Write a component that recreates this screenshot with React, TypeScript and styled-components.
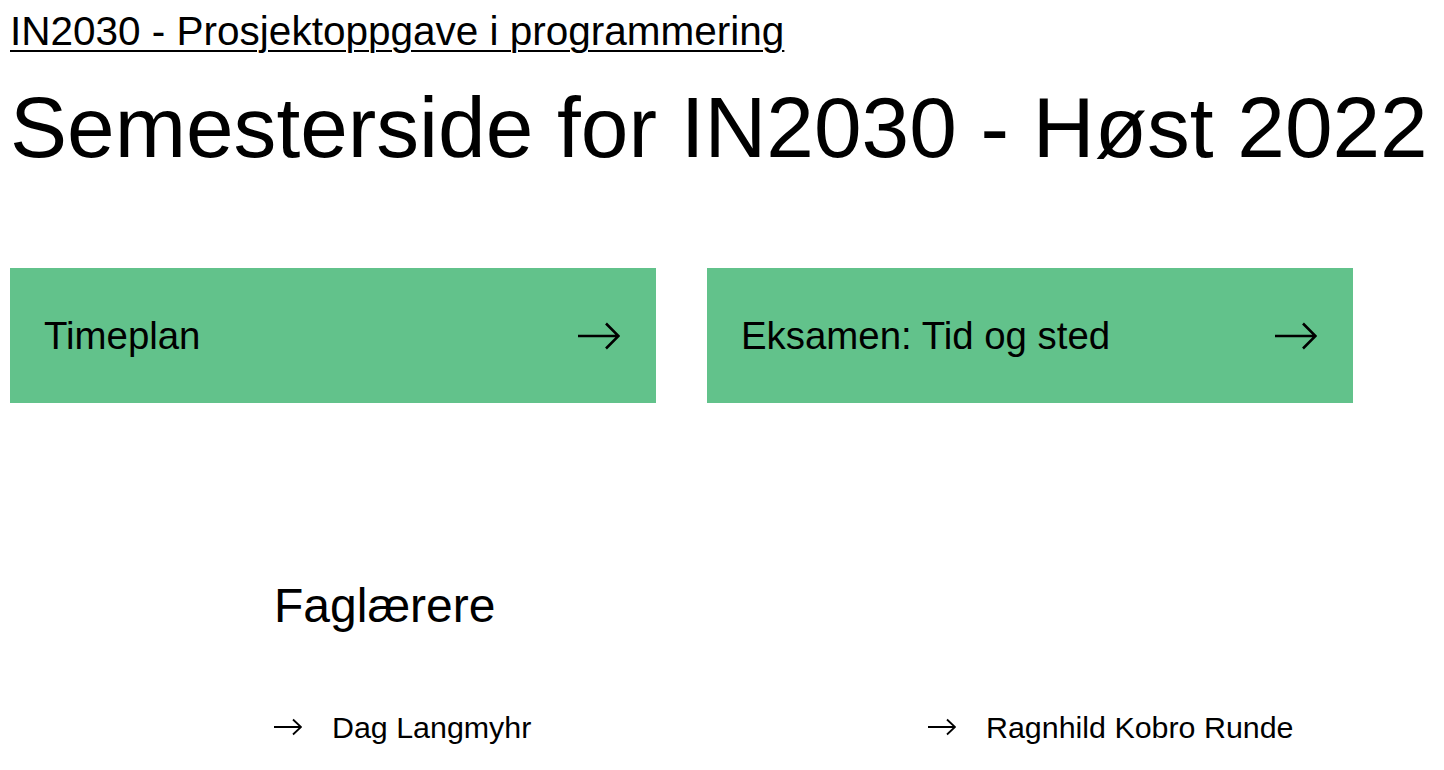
import React from "react";
import styled, { createGlobalStyle } from "styled-components";

const Global = createGlobalStyle`
  html, body { margin: 0; padding: 0; background: #fff; }
  body { font-family: "Liberation Sans", Arial, Helvetica, sans-serif; color: #000; overflow: hidden; }
  * { box-sizing: border-box; }
`;

const Page = styled.div`
  padding: 8px 10px 0 10px;
`;

const CourseLink = styled.a`
  display: inline-block;
  font-size: 40.5px;
  line-height: 46px;
  color: #000;
  text-decoration: underline;
  text-decoration-thickness: 2px;
  text-underline-offset: 5px;
`;

const Title = styled.h1`
  margin: 24px 0 0 0;
  font-size: 85.6px;
  font-weight: 400;
  line-height: 100px;
`;

const Shortcuts = styled.div`
  display: grid;
  grid-template-columns: 646px 646px;
  column-gap: 51px;
  margin-top: 90px;
`;

const Shortcut = styled.a`
  display: flex;
  align-items: center;
  justify-content: space-between;
  height: 135px;
  padding: 0 36px 0 34px;
  background: #62c28b;
  color: #000;
  text-decoration: none;
  font-size: 38.4px;
`;

const Arrow = ({ size }: { size: "big" | "small" }) =>
  size === "big" ? (
    <svg width="42" height="28" viewBox="0 0 42 28" fill="none">
      <path d="M0 14 H40 M28 1.5 L40.5 14 L28 26.5" stroke="#000" strokeWidth="2.6" />
    </svg>
  ) : (
    <svg width="28" height="18" viewBox="0 0 28 18" fill="none">
      <path d="M0 9 H26.5 M19 1.5 L27 9 L19 16.5" stroke="#000" strokeWidth="1.8" />
    </svg>
  );

const Teachers = styled.section`
  margin: 177px 0 0 264px;
`;

const SectionTitle = styled.h2`
  margin: 0;
  font-size: 48px;
  font-weight: 400;
  line-height: 52px;
`;

const People = styled.ul`
  list-style: none;
  margin: 77px 0 0 0;
  padding: 0;
  display: grid;
  grid-template-columns: 654px 1fr;
`;

const Person = styled.li`
  display: flex;
  align-items: center;
  gap: 30px;
  font-size: 30.4px;
  line-height: 36px;
  white-space: nowrap;
`;

export default function App() {
  return (
    <>
      <Global />
      <Page>
        <CourseLink href="#">IN2030 - Prosjektoppgave i programmering</CourseLink>
        <Title>Semesterside for IN2030 - Høst 2022</Title>
        <Shortcuts>
          <Shortcut href="#">
            <span>Timeplan</span>
            <Arrow size="big" />
          </Shortcut>
          <Shortcut href="#">
            <span>Eksamen: Tid og sted</span>
            <Arrow size="big" />
          </Shortcut>
        </Shortcuts>
        <Teachers>
          <SectionTitle>Faglærere</SectionTitle>
          <People>
            <Person>
              <Arrow size="small" />
              <span>Dag Langmyhr</span>
            </Person>
            <Person>
              <Arrow size="small" />
              <span>Ragnhild Kobro Runde</span>
            </Person>
          </People>
        </Teachers>
      </Page>
    </>
  );
}
